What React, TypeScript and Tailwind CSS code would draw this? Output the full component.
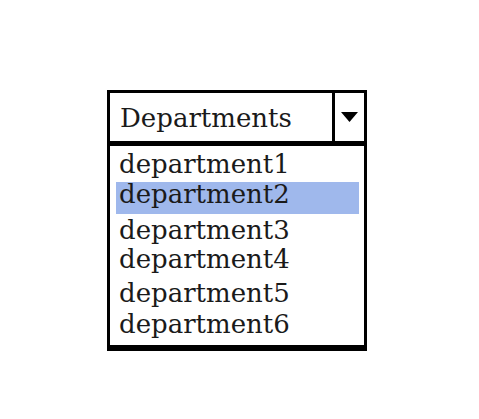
export default function App() {
  const rows = [
    { label: "department1", cls: "mt-0" },
    { label: "department2", cls: "mt-[4px]", selected: true },
    { label: "department3", cls: "mt-[2px]" },
    { label: "department4", cls: "mt-[1px]" },
    { label: "department5", cls: "mt-[6px]" },
    { label: "department6", cls: "mt-[3px]" },
  ];

  return (
    <main
      className="w-[479px] h-[419px] bg-white pt-[90px] pl-[107px] text-[#1a1a1a]"
      style={{ fontFamily: '"DejaVu Serif", "Liberation Serif", serif' }}
    >
      <div className="w-[260px]">
        {/* Select header */}
        <div className="flex h-[51px] border-x-[3px] border-t-[3px] border-black">
          <div className="flex-1 pl-[10px] pt-[2px] text-[26px] leading-[46px] border-r-[3px] border-black">
            Departments
          </div>
          <div className="w-[29px] flex items-center justify-center">
            <svg width="17" height="10" viewBox="0 0 17 10">
              <polygon points="0,0 17,0 8.5,10" fill="#000" />
            </svg>
          </div>
        </div>

        {/* Options list */}
        <div className="border-x-[3px] border-t-[5px] border-b-[6px] border-black pt-[4px] pb-[7px]">
          {rows.map((row) =>
            row.selected ? (
              <div
                key={row.label}
                className={`${row.cls} ml-[6px] mr-[5px] h-[32px] pl-[3px] bg-[#9fb8ec] text-[26px] leading-[25px]`}
              >
                {row.label}
              </div>
            ) : (
              <div key={row.label} className={`${row.cls} pl-[9px] text-[26px] leading-[28px]`}>
                {row.label}
              </div>
            )
          )}
        </div>
      </div>
    </main>
  );
}
